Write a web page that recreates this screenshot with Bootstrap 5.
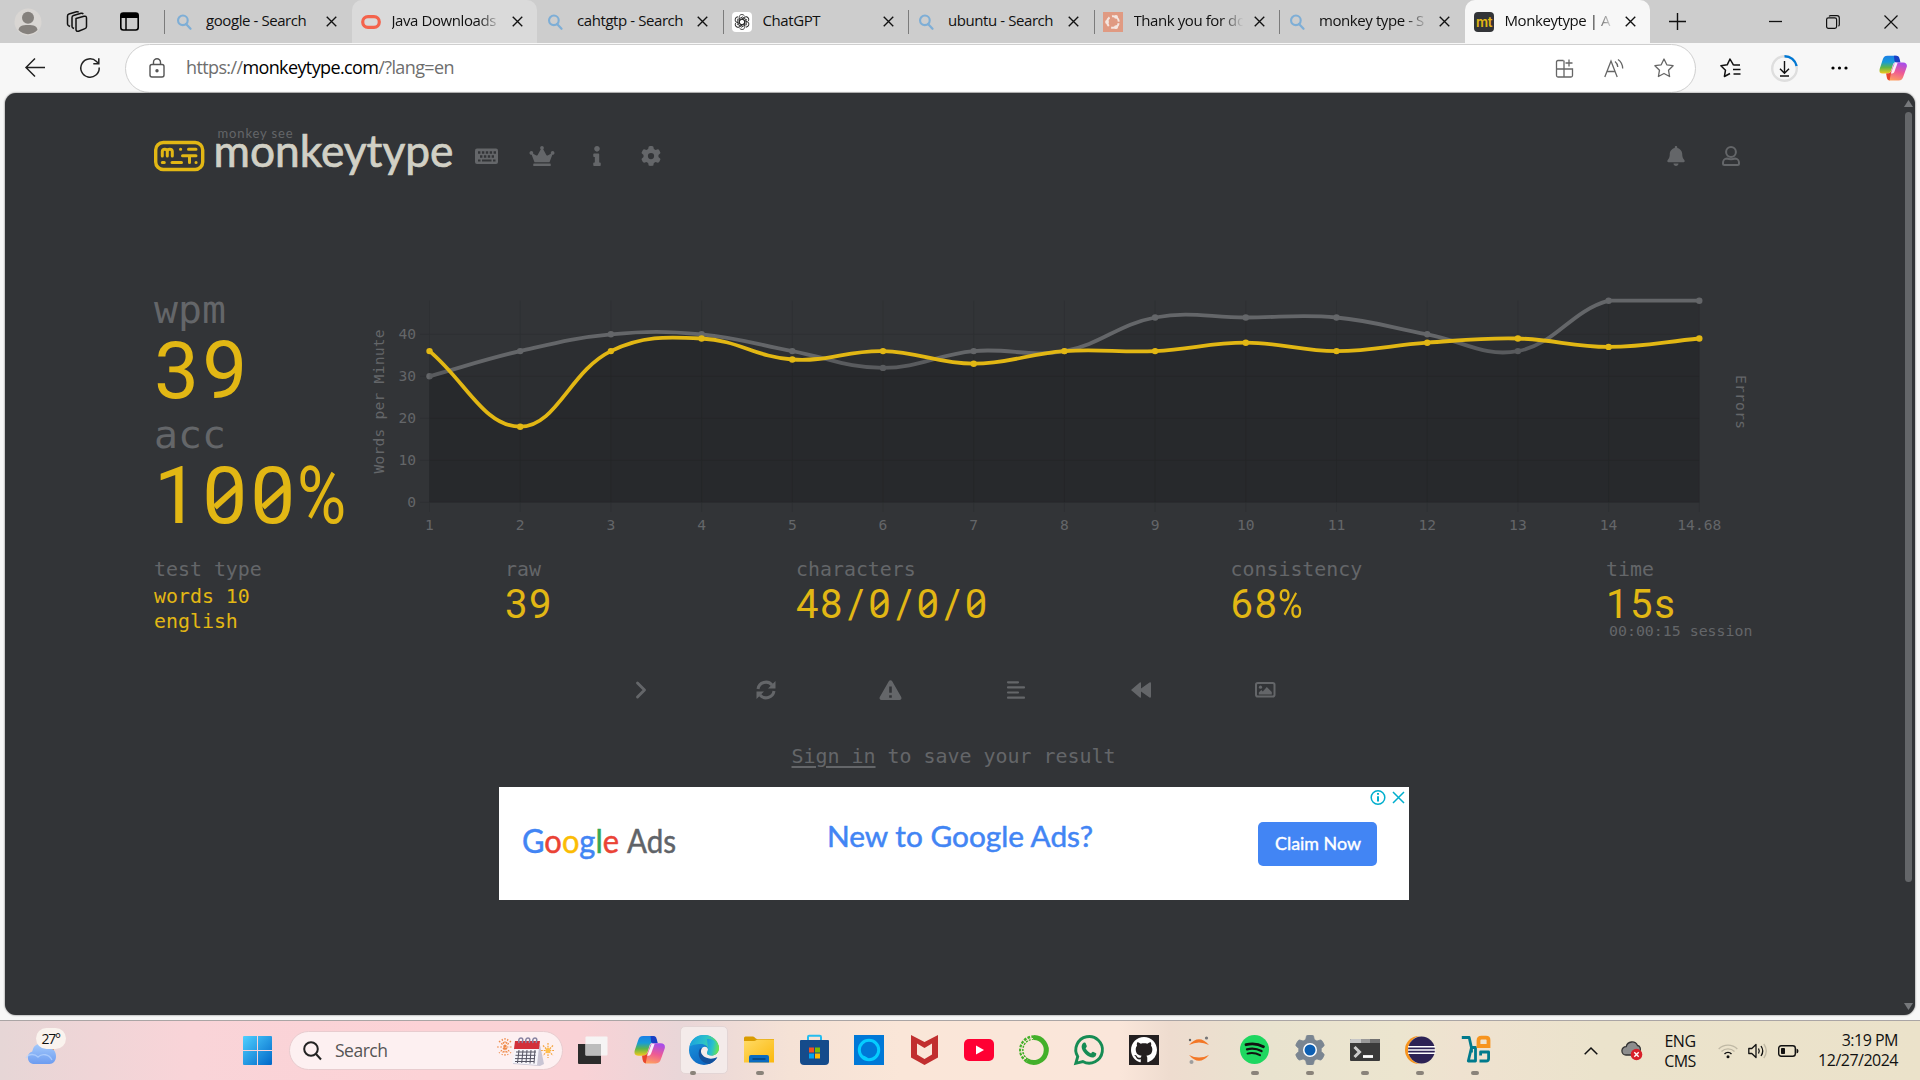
<!DOCTYPE html>
<html lang="en">
<head>
<meta charset="utf-8">
<meta name="viewport" content="width=device-width, initial-scale=1">
<title>Monkeytype | A minimalistic, customizable typing test</title>
<link href="https://cdn.jsdelivr.net/npm/bootstrap@5.3.0/dist/css/bootstrap.min.css" rel="stylesheet">
<style>
:root{--mt-bg:#323437;--mt-main:#e2b714;--mt-sub:#646669;--mt-text:#d1d0c5}
html,body{height:1080px;overflow:hidden}
body{width:1920px;background:#f7f7f7;font-family:"Open Sans","Noto Sans",sans-serif;color:#111}
svg{display:block;flex:none;overflow:visible}
.tabstrip{height:43px;background:#cdcdcd}
.strip-tools{width:166px;padding-left:14px;flex:none}
.btab{width:185.5px;flex:none;height:43px;font-size:15px;letter-spacing:-.42px;padding-left:9px;position:relative}
.btab.sep::before{content:"";position:absolute;left:0;top:10px;width:1px;height:24px;background:#7b7b7b}
.btab.first::before{left:-2px}
.btab .ico{width:20px;margin-right:11px}
.btab .ttl{width:114px;overflow:hidden;white-space:nowrap;line-height:22px;margin-top:-3px}
.btab .fade-out{-webkit-mask-image:linear-gradient(90deg,#000 76%,transparent 96%)}
.btab .x{margin-left:6px}
.btab.hov{background:#dadada;border-radius:10px 10px 0 0}
.btab.act{background:#f7f7f7;border-radius:10px 10px 0 0}
.toolbar{height:50px;background:#f7f7f7}
.address{width:1571px;height:49px;border:1px solid #cfcfcf;border-radius:25px;background:#fff;margin-left:20px;padding:0 21px 0 22px}
.url{font-size:18px;letter-spacing:-.62px;color:#6e6e6e;margin:-2px 0 0 20px;line-height:24px}
.url b{font-weight:400;color:#000}
.page{margin:0 5px;height:922px;background:var(--mt-bg);border-radius:11px;color:var(--mt-sub);font-family:"DejaVu Sans Mono","Liberation Mono",monospace;position:relative;box-shadow:0 0 2px #555}
.mt-head{padding:26px 175px 0 148px;height:187px}
.results{padding:0 154px 0 149px}
.side{width:216px;height:253px}
.lbl-lg{font-size:39.8px;line-height:40px;height:40px}
.figure-lg,.figure-md{font-family:Roboto,sans-serif;letter-spacing:.04em;color:var(--mt-main);white-space:nowrap}
.figure-lg{font-size:80px;line-height:85px;height:85px}
.figure-md{font-size:40px;line-height:44px;height:44px;margin-top:1px}
.z{position:relative}
.z::after{content:"";position:absolute;left:.11em;top:.56em;width:.38em;height:.08em;background:currentColor;transform:rotate(-42deg)}
.pc{display:inline-block;transform:scaleX(.84);transform-origin:0 0;margin-left:-.02em}
.sl{letter-spacing:.1em;padding-left:.09em}
.details{height:90px}
.details .lbl{font-size:19.9px;line-height:24px;height:24px}
.words{font-size:19.9px;line-height:25px;color:var(--mt-main)}
.session{font-size:14.9px;line-height:16px;margin:-4px 0 0 3px}
.acts{width:750px}
.acts>div{width:125px}
.signin{font-size:19.95px;line-height:26px}
.signin u{text-underline-offset:3px;text-decoration-thickness:1.5px}
.ad{width:910px;height:113px;background:#fff;position:relative}
.ad-btn{width:119px;height:44px;border-radius:5px;background:#4285f4}
.sbar{position:absolute;right:0;top:0;width:14px;height:922px}
.thumb{height:770px;width:7px;border-radius:4px;background:#646669}
.edge-strip{height:5px}
.taskbar{height:60px;border-top:1px solid #aaa5a5;background:linear-gradient(90deg,#e6d6d6 0,#f9d4d8 190px,#fcd2d6 430px,#f9d2d6 580px,#e9d6d8 680px,#f5e2d6 790px,#fae6d8 900px,#fae6da 1120px,#eedccf 1170px,#e9e3cf 1270px,#ece5cf 1400px,#efe2d0 1460px,#ebe3cc 1600px,#ebe2ca 1920px)}
.tb-search{width:274px;height:39px;border-radius:20px;background:#fdf0f1;border:1px solid #e8cccf;padding:0 7px 0 13px}
.tb-app{width:55.05px;height:60px;position:relative;flex:none}
.tb-app.run::after{content:"";position:absolute;bottom:6px;left:24px;width:8px;height:4px;border-radius:2px;background:#8a837a}
.tb-app.cur::before{content:"";position:absolute;left:3.5px;top:5px;width:48px;height:48px;border-radius:5px;background:#f4ebea;border:1px solid #e3d5d5}
.tb-app.cur::after{left:13px;width:6px}
.tb-app svg{position:relative;top:-1px}
.tray{font-size:16px;letter-spacing:-.5px;line-height:20px}
</style>
</head>
<body>
<svg width="0" height="0" class="position-absolute">
<defs>
<linearGradient id="cpA" x1="0" y1="0" x2="0" y2="1"><stop offset="0" stop-color="#1c7fe6"/><stop offset=".35" stop-color="#179bd8"/><stop offset=".65" stop-color="#5fb548"/><stop offset="1" stop-color="#f4c81b"/></linearGradient>
<linearGradient id="cpB" x1=".6" y1="0" x2=".3" y2="1"><stop offset="0" stop-color="#a94ee8"/><stop offset=".5" stop-color="#ee5a94"/><stop offset="1" stop-color="#ffa25e"/></linearGradient>
<symbol id="copilot" viewBox="0 0 30 30">
<path d="M9 2h9c2 0 3 1 3.500 3l1 3.500h-4c-2 0-3 1-3.600 3L13 18c-.8 2-2 3-4 3H4C1 21 0 19 .7 16L4 6c.8-2.500 2-4 5-4z" fill="url(#cpA)"/>
<path d="M16 2h2.500c2 0 3 1 3.500 3l1 4h-3.500c-2 0-2.500-.6-3-2z" fill="#1a3fc4"/>
<path d="M21 28.500h-9c-2 0-3-1-3.500-3L7.500 21H9c2.500 0 3.600-1 4.300-3l2.200-6.500C16.200 9.500 17.500 9 19.500 9H26c3 0 4.500 2 3.700 5L26 24.500c-.8 2.500-2 4-5 4z" fill="url(#cpB)"/>
<path d="M8 21c3 0 4.600-.9 5.300-3l-2 10.500C9.500 28 9 27 8.500 25.500z" fill="#e8452c"/>
<path d="M17 9.500h3l-3.500 9.500c-.8 1.800-1.800 2-3.800 2z" fill="#fff" opacity=".9"/>
</symbol>
<symbol id="lens" viewBox="0 0 16 16"><circle cx="7" cy="6.500" r="4.300" fill="none" stroke="#7eaed6" stroke-width="1.900"/><path d="M9.800 9.800l4 4.200" stroke="#7eaed6" stroke-width="2" stroke-linecap="round"/></symbol>
<symbol id="cross" viewBox="0 0 12 12"><path d="M.8.8l10.400 10.400M11.200.8L.8 11.200" stroke="#111" stroke-width="1.500"/></symbol>
<symbol id="gear" viewBox="0 0 512 512"><path d="M495.900 166.600c3.200 8.700.5 18.400-6.400 24.600l-43.300 39.400c1.100 8.300 1.700 16.800 1.700 25.400s-.6 17.100-1.700 25.400l43.300 39.400c6.900 6.200 9.600 15.900 6.400 24.600-4.400 11.900-9.700 23.300-15.800 34.300l-4.700 8.100c-6.600 11-14 21.400-22.100 31.200-5.900 7.200-15.700 9.600-24.500 6.800l-55.700-17.700c-13.400 10.300-28.200 18.900-44 25.400l-12.500 57.100c-2 9.100-9 16.300-18.200 17.800-13.800 2.300-28 3.500-42.500 3.500s-28.700-1.200-42.500-3.500c-9.200-1.500-16.200-8.700-18.200-17.800l-12.500-57.100c-15.800-6.500-30.600-15.100-44-25.400l-55.600 17.800c-8.800 2.800-18.600.3-24.500-6.800-8.100-9.800-15.500-20.200-22.100-31.200l-4.700-8.100c-6.100-11-11.400-22.400-15.800-34.300-3.200-8.700-.5-18.400 6.400-24.600l43.300-39.400C64.600 273.100 64 264.600 64 256s.6-17.100 1.700-25.400l-43.300-39.400c-6.900-6.200-9.600-15.900-6.400-24.600 4.400-11.900 9.700-23.300 15.800-34.300l4.700-8.100c6.600-11 14-21.400 22.100-31.200 5.900-7.200 15.700-9.600 24.500-6.800l55.700 17.700c13.400-10.300 28.200-18.900 44-25.400l12.500-57.100c2-9.100 9-16.300 18.200-17.800C227.300 1.200 241.500 0 256 0s28.700 1.200 42.500 3.500c9.200 1.500 16.200 8.700 18.200 17.800l12.500 57.100c15.800 6.500 30.600 15.100 44 25.400l55.700-17.700c8.800-2.800 18.600-.3 24.500 6.800 8.100 9.800 15.500 20.200 22.100 31.200l4.700 8.100c6.100 11 11.400 22.400 15.800 34.300zM256 336a80 80 0 1 0 0-160 80 80 0 1 0 0 160z"/></symbol>
</defs>
</svg>

<div class="tabstrip d-flex">
  <div class="strip-tools d-flex align-items-center">
    <svg width="28" height="28" viewBox="0 0 28 28"><circle cx="14" cy="14" r="13.500" fill="#d9d6d3"/><circle cx="14" cy="9.800" r="6" fill="#85817d"/><path d="M4.500 22c.5-4 3.500-5 9.500-5s9 1 9.500 5a13 13 0 0 1-19 0z" fill="#85817d"/></svg>
    <svg class="ms-4" width="22" height="22" viewBox="0 0 22 22" fill="none" stroke="#111" stroke-width="1.500" stroke-linejoin="round"><path d="M10 7.500l8-2.200c1.500-.4 2.500.3 2.500 1.700v8.500c0 1-.5 1.800-1.500 2.100l-6.500 2.600c-1.500.5-2.500-.2-2.500-1.700z"/><path d="M8 17.500l-1-.5c-.7-.3-1-1-1-1.700V6.500c0-1 .5-1.700 1.500-2L15 2.300c1-.3 1.800 0 2.200.8"/><path d="M4 15.500l-1.500-.8c-.7-.4-1-1-1-1.700V5c0-1 .5-1.700 1.500-2L10.500.8c1-.3 1.800 0 2.200.6"/></svg>
    <svg style="margin-left:32px" width="19" height="19" viewBox="0 0 19 19"><rect x=".8" y="1" width="17.400" height="17" rx="2.500" fill="none" stroke="#000" stroke-width="1.600"/><path d="M1 6V3q0-2 2-2h13q2 0 2 2v3z"/><path d="M6 6v12" stroke="#000" stroke-width="1.500"/></svg>
  </div>
  <div class="btab sep first d-flex align-items-center"><div class="ico"><svg width="18" height="18"><use href="#lens"/></svg></div><div class="ttl">google - Search</div><svg class="x" width="11" height="11"><use href="#cross"/></svg></div>
  <div class="btab hov d-flex align-items-center"><div class="ico"><svg width="20" height="14" viewBox="0 0 20 14"><rect x="1.700" y="1.700" width="16.600" height="10.600" rx="5.300" fill="none" stroke="#f4634c" stroke-width="3.200"/></svg></div><div class="ttl fade-out">Java Downloads</div><svg class="x" width="11" height="11"><use href="#cross"/></svg></div>
  <div class="btab d-flex align-items-center"><div class="ico"><svg width="18" height="18"><use href="#lens"/></svg></div><div class="ttl">cahtgtp - Search</div><svg class="x" width="11" height="11"><use href="#cross"/></svg></div>
  <div class="btab sep d-flex align-items-center"><div class="ico"><svg width="20" height="20" viewBox="0 0 20 20"><rect width="20" height="20" rx="4" fill="#fff"/><g fill="none" stroke="#222" stroke-width=".9"><g id="pet"><path d="M10 7.200l2.800 1.600v4.400L9.200 15.300"/><path d="M7.200 7.500V5.300C7.200 2.300 10.700 1.600 12.500 3.900"/></g><use href="#pet" transform="rotate(60 10 10)"/><use href="#pet" transform="rotate(120 10 10)"/><use href="#pet" transform="rotate(180 10 10)"/><use href="#pet" transform="rotate(240 10 10)"/><use href="#pet" transform="rotate(300 10 10)"/></g></svg></div><div class="ttl">ChatGPT</div><svg class="x" width="11" height="11"><use href="#cross"/></svg></div>
  <div class="btab sep d-flex align-items-center"><div class="ico"><svg width="18" height="18"><use href="#lens"/></svg></div><div class="ttl">ubuntu - Search</div><svg class="x" width="11" height="11"><use href="#cross"/></svg></div>
  <div class="btab sep d-flex align-items-center"><div class="ico"><svg width="20" height="20" viewBox="0 0 20 20"><rect width="20" height="20" fill="#e09a82"/><circle cx="10" cy="10" r="5.800" fill="none" stroke="#f5e6e0" stroke-width="2" stroke-dasharray="9.500 2.650" stroke-dashoffset="-1.300"/><g fill="#f5e6e0"><circle cx="4" cy="10" r="1.900"/><circle cx="13" cy="4.800" r="1.900"/><circle cx="13" cy="15.200" r="1.900"/></g></svg></div><div class="ttl fade-out">Thank you for do</div><svg class="x" width="11" height="11"><use href="#cross"/></svg></div>
  <div class="btab sep d-flex align-items-center"><div class="ico"><svg width="18" height="18"><use href="#lens"/></svg></div><div class="ttl fade-out">monkey type - S</div><svg class="x" width="11" height="11"><use href="#cross"/></svg></div>
  <div class="btab act d-flex align-items-center"><div class="ico"><svg width="20" height="20"><rect width="20" height="20" rx="4" fill="#323437"/><text x="2" y="14.500" font-family="Inter,sans-serif" font-size="13" font-weight="600" fill="#e2b714" textLength="16" lengthAdjust="spacingAndGlyphs">mt</text></svg></div><div class="ttl fade-out">Monkeytype | A</div><svg class="x" width="11" height="11"><use href="#cross"/></svg></div>
  <div class="d-flex align-items-center flex-grow-1 justify-content-between" style="padding:0 22px 0 19px">
    <svg width="17" height="17" viewBox="0 0 17 17"><path d="M8.500 0v17M0 8.500h17" stroke="#111" stroke-width="1.400"/></svg>
    <div class="d-flex align-items-center" style="gap:44px">
      <svg width="13" height="13" viewBox="0 0 13 13"><path d="M0 6.500h13" stroke="#111" stroke-width="1.300"/></svg>
      <svg width="14" height="14" viewBox="0 0 14 14" fill="none" stroke="#111" stroke-width="1.200"><rect x=".6" y="2.800" width="10" height="10.500" rx="1.800"/><path d="M3 1.300c.5-.5 1-.7 1.700-.7h6.300c1.400 0 2.300 1 2.300 2.300v6.500c0 .8-.3 1.500-.8 1.900"/></svg>
      <svg width="14" height="14" viewBox="0 0 14 14"><path d="M.5.500l13 13M13.500.500l-13 13" stroke="#111" stroke-width="1.200"/></svg>
    </div>
  </div>
</div>

<div class="toolbar d-flex align-items-center">
  <svg style="margin-left:25px" width="20" height="20" viewBox="0 0 20 20" fill="none" stroke="#222" stroke-width="1.500"><path d="M20 9.500H1M10 .5L1 9.500l9 9"/></svg>
  <svg style="margin-left:35px" width="20" height="20" viewBox="0 0 20 20" fill="none" stroke="#222" stroke-width="1.500"><path d="M19.200 9.500A9.200 9.200 0 1 1 16.500 3.500L18.500 5.500M18.800.3v5.500h-5.500"/></svg>
  <div class="address d-flex align-items-center" style="margin-left:25px">
    <svg width="18" height="20" viewBox="0 0 18 20" fill="none" stroke="#555" stroke-width="1.400"><rect x="2" y="6.500" width="14" height="12.500" rx="2"/><path d="M5.500 6.500V4.200a3.500 3.500 0 0 1 7 0v2.300"/><circle cx="9" cy="12.700" r="1" fill="#555"/></svg>
    <div class="url">https://<b>monkeytype.com</b>/?lang=en</div>
    <div class="ms-auto d-flex align-items-center" style="gap:30px">
      <svg width="19" height="19" viewBox="0 0 19 19" fill="none" stroke="#666" stroke-width="1.300"><path d="M8.500 1.500H3q-1.500 0-1.500 1.500v13.500Q1.500 18 3 18h13q1.500 0 1.500-1.500V10H1.500M9 1.500V18M17.500 10v-.5M14 .5v7M10.500 4h7"/></svg>
      <svg width="20" height="19" viewBox="0 0 20 19" fill="none" stroke="#666" stroke-width="1.300"><path d="M.8 18L7 2l6.200 16M3 12.500h8M11 2.500c1.600 1.300 2.600 3 2.800 5.500M14 .5c3 2 4.500 4.800 4.700 9"/></svg>
      <svg width="20" height="20" viewBox="0 0 20 20" fill="none" stroke="#666" stroke-width="1.300" stroke-linejoin="round"><path d="M10 1l2.800 5.800 6.300.9-4.600 4.500 1.100 6.300L10 15.500l-5.600 3 1.100-6.300L.9 7.700l6.300-.9z"/></svg>
    </div>
  </div>
  <div class="d-flex align-items-center" style="margin-left:24px;gap:21px">
    <svg width="21" height="20" viewBox="0 0 21 20" fill="none" stroke="#111" stroke-width="1.500" stroke-linejoin="round"><path d="M13.500 7.200L10 1 7.200 6.800.9 7.700l4.600 4.500-1.100 6.300L10 15.500M13.300 7H20M13 11.500h7.500M13.500 16h7"/></svg>
    <svg style="margin-left:9px" width="27" height="27" viewBox="0 0 27 27" fill="none"><circle cx="13.500" cy="13.500" r="12.300" stroke="#dedede" stroke-width="2.400"/><path d="M13.500 1.200A12.300 12.300 0 0 1 25.600 11" stroke="#0078d4" stroke-width="2.400"/><path d="M13.500 6v12M9 13.800l4.500 4.500 4.500-4.500M9 21h9" stroke="#111" stroke-width="1.400"/></svg>
    <svg style="margin-left:12px" width="17" height="4"><circle cx="2" cy="2" r="1.600"/><circle cx="8.500" cy="2" r="1.600"/><circle cx="15" cy="2" r="1.600"/></svg>
    <svg style="margin-left:10px" width="28" height="28"><use href="#copilot"/></svg>
  </div>
</div>

<main class="page">
  <header class="mt-head d-flex align-items-start">
    <svg width="306" height="70" viewBox="0 0 306 70">
      <g transform="translate(.5 0)" fill="none" stroke="#e2b714"><rect x="2.200" y="23.500" width="47" height="27" rx="7.500" stroke-width="3.400"/><g stroke-width="3" stroke-linecap="round" stroke-linejoin="round"><path d="M8.800 37v-4.500q0-2.300 2.500-2.300t2.500 2.300V37m0-4.500q0-2.300 2.500-2.300t2.500 2.300V37M27 30.300h.2M35 30.300h7.500M29 36.700h13.500M36 37v6.500M8.800 43.500h2M18.500 43.500h9.500M42.500 43.500h.1"/></g></g>
      <text x="64.500" y="19" font-family="Lato,sans-serif" font-size="13" fill="#646669" textLength="75">monkey see</text>
      <text x="60.500" y="48" font-family="Lato,sans-serif" font-size="43.500" fill="#d1d0c5" stroke="#d1d0c5" stroke-width=".7" textLength="240" lengthAdjust="spacingAndGlyphs">monkeytype</text>
    </svg>
    <nav class="d-flex align-items-center" style="height:73px;margin-left:16px">
      <svg width="24" height="18" viewBox="0 0 24 18"><rect y="1.500" width="23" height="15.500" rx="2" fill="#646669"/><path d="M3 5.500h18M5 9.500h14" stroke="#323437" stroke-width="2.400" stroke-dasharray="2.400 1.500"/><path d="M3 13.500h2.500M7 13.500h9.500M18 13.500h2.500" stroke="#323437" stroke-width="2"/></svg>
      <svg style="margin-left:30px" width="26" height="20" viewBox="0 0 640 512" fill="#646669"><path d="M528 448H112c-8.800 0-16 7.200-16 16v32c0 8.800 7.200 16 16 16h416c8.800 0 16-7.200 16-16v-32c0-8.800-7.200-16-16-16zm64-320c-26.500 0-48 21.500-48 48 0 7.100 1.600 13.700 4.400 19.800L476 239.200c-15.400 9.200-35.300 4-44.200-11.600L350.300 85C361 76.200 368 63 368 48c0-26.500-21.500-48-48-48s-48 21.500-48 48c0 15 7 28.200 17.700 37l-81.500 142.600c-8.900 15.600-28.900 20.800-44.200 11.600l-72.300-43.400c2.700-6 4.400-12.700 4.400-19.800 0-26.500-21.500-48-48-48S0 149.500 0 176s21.500 48 48 48c2.600 0 5.200-.4 7.700-.8L128 416h384l72.300-192.800c2.500.4 5.100.8 7.700.8 26.500 0 48-21.500 48-48s-21.500-48-48-48z"/></svg>
      <svg style="margin-left:38px" width="8" height="20" viewBox="0 0 192 512" fill="#646669"><path d="M20 424.200h20V279.800H20c-11 0-20-9-20-20V212c0-11 9-20 20-20h112c11 0 20 9 20 20v212.200h20c11 0 20 9 20 20V492c0 11-9 20-20 20H20c-11 0-20-9-20-20v-47.800c0-11 9-20 20-20zM96 0C56.200 0 24 32.200 24 72s32.200 72 72 72 72-32.200 72-72S135.800 0 96 0z"/></svg>
      <svg style="margin-left:40px" width="20" height="20" fill="#646669"><use href="#gear"/></svg>
    </nav>
    <div class="ms-auto d-flex align-items-center" style="height:73px;gap:37px">
      <svg width="18" height="20" viewBox="0 0 448 512" fill="#646669"><path d="M224 0c-17.700 0-32 14.300-32 32v19.200C119 66 64 130.600 64 208v18.800c0 47-17.300 92.400-48.500 127.600l-7.400 8.300c-8.400 9.400-10.400 22.900-5.300 34.400S19.400 416 32 416h384c12.600 0 24-7.400 29.200-18.900s3.100-25-5.300-34.400l-7.400-8.300C401.300 319.200 384 273.900 384 226.800V208c0-77.400-55-142-128-156.800V32c0-17.700-14.300-32-32-32zm45.300 493.300c12-12 18.700-28.300 18.700-45.300H160c0 17 6.700 33.300 18.700 45.300S207 512 224 512s33.300-6.700 45.300-18.700z"/></svg>
      <svg width="18" height="20" viewBox="0 0 18 20" fill="none" stroke="#646669" stroke-width="2"><circle cx="9" cy="6" r="4.900"/><path d="M5 12.500c1.500.6 2.500.7 4 .7s2.500-.1 4-.7c2.500 0 4 2 4 4.300v.7q0 1.500-1.500 1.500h-13Q1 19 1 17.500v-.7c0-2.300 1.500-4.300 4-4.300z"/></svg>
    </div>
  </header>

  <section class="results">
    <div class="d-flex">
      <div class="side" style="padding-top:9px">
        <div class="lbl-lg">wpm</div>
        <div class="figure-lg">39</div>
        <div class="lbl-lg">acc</div>
        <div class="figure-lg">1<span class="z">0</span><span class="z">0</span><span class="pc">%</span></div>
      </div>
      <svg id="wpmChart" width="1390" height="253" viewBox="370 280 1390 253" font-family="DejaVu Sans Mono,monospace" font-size="14.600" fill="#646669"></svg>
    </div>
    <div class="details d-flex" style="padding-top:25px">
      <div style="width:351px"><div class="lbl">test type</div><div class="words" style="margin-top:2px">words 10<br>english</div></div>
      <div style="width:291px"><div class="lbl">raw</div><div class="figure-md">39</div></div>
      <div style="width:434.500px"><div class="lbl">characters</div><div class="figure-md">48<span class="sl">/</span><span class="z">0</span><span class="sl">/</span><span class="z">0</span><span class="sl">/</span><span class="z">0</span></div></div>
      <div style="width:375.500px"><div class="lbl">consistency</div><div class="figure-md">68<span class="pc">%</span></div></div>
      <div class="text-nowrap" style="width:150px"><div class="lbl">time</div><div class="figure-md">15s</div><div class="session">00:00:15 session</div></div>
    </div>
  </section>

  <div class="d-flex" style="padding-left:573px;margin-top:51px;height:32px">
    <div class="acts d-flex align-items-center">
      <div class="d-flex justify-content-center"><svg width="12" height="18" viewBox="0 0 12 18" fill="none" stroke="#646669" stroke-width="2.900" stroke-linecap="round" stroke-linejoin="round"><path d="M2.500 2L9.500 9l-7 7"/></svg></div>
      <div class="d-flex justify-content-center"><svg width="20" height="20" viewBox="0 0 20 20" fill="none" stroke="#646669" stroke-width="3"><path d="M2 9A8 8 0 0 1 16 5M18 11A8 8 0 0 1 4 15"/><path d="M19.500 1v7.500H12zM.5 19v-7.500H8z" fill="#646669" stroke="none"/></svg></div>
      <div class="d-flex justify-content-center"><svg width="23" height="20" viewBox="0 0 23 20"><path d="M11.500.3c.8 0 1.300.3 1.700 1l9 15.800c.8 1.400 0 2.900-1.700 2.900h-18C.8 20 0 18.500.8 17.100l9-15.800c.4-.7.900-1 1.700-1z" fill="#646669"/><path d="M11.500 6.500v6.300M11.500 15.300v2.400" stroke="#323437" stroke-width="2.600"/></svg></div>
      <div class="d-flex justify-content-center"><svg width="18" height="18" viewBox="0 0 18 18" stroke="#646669" stroke-width="2.200" stroke-linecap="round"><path d="M1 1.300h10M1 6.400h16M1 11.500h10M1 16.700h16"/></svg></div>
      <div class="d-flex justify-content-center"><svg width="20" height="16" viewBox="0 0 20 16" fill="#646669"><path d="M0 8L8.800.6q1.200-.8 1.200.7V6.600L18.500.6Q20-.2 20 1.500v13q0 1.700-1.500.9L10 9.400v5.300q0 1.500-1.200.7z"/></svg></div>
      <div class="d-flex justify-content-center"><svg width="21" height="16" viewBox="0 0 21 16"><rect x="1" y="1" width="18.500" height="13.500" rx="1.800" fill="none" stroke="#646669" stroke-width="2"/><circle cx="5.500" cy="5.200" r="1.600" fill="#646669"/><path d="M3.800 12.500v-2l2.500-2.500 1.500 1.500 4-4.500 5 5v2.500z" fill="#646669"/></svg></div>
    </div>
  </div>
  <div class="signin" style="padding-left:786.500px;margin-top:37px"><u>Sign in</u> to save your result</div>

  <div class="ad d-flex align-items-center" style="margin:18px 0 0 494px">
    <svg width="154" height="40" style="margin:-3px 0 0 24px" font-family="Lato,sans-serif" font-size="32" stroke-width=".5"><text x="-1" y="31" textLength="97" lengthAdjust="spacingAndGlyphs"><tspan fill="#4285f4" stroke="#4285f4">G</tspan><tspan fill="#ea4335" stroke="#ea4335">o</tspan><tspan fill="#fbbc04" stroke="#fbbc04">o</tspan><tspan fill="#4285f4" stroke="#4285f4">g</tspan><tspan fill="#34a853" stroke="#34a853">l</tspan><tspan fill="#ea4335" stroke="#ea4335">e</tspan></text><text x="104" y="31" fill="#5f6368" stroke="#5f6368" textLength="49" lengthAdjust="spacingAndGlyphs">Ads</text></svg>
    <svg width="266" height="40" style="margin:-5px 0 0 150px"><text x="0" y="26" font-family="Lato,sans-serif" font-size="29" fill="#4285f4" stroke="#4285f4" stroke-width=".5" textLength="266" lengthAdjust="spacingAndGlyphs">New to Google Ads?</text></svg>
    <div class="ad-btn d-flex align-items-center justify-content-center" style="margin-left:165px"><svg width="86" height="24"><text x="0" y="18" font-family="Lato,sans-serif" font-size="18" fill="#fff" stroke="#fff" stroke-width=".4" textLength="86" lengthAdjust="spacingAndGlyphs">Claim Now</text></svg></div>
    <svg class="position-absolute top-0 end-0" width="39" height="20" fill="none" stroke="#00aecd" stroke-width="1.500"><circle cx="8" cy="10.500" r="6.800"/><path d="M8 9.200v5.200M8 6v1.800" stroke-width="2"/><path d="M23 5l11 11M34 5L23 16"/></svg>
  </div>

  <div class="sbar d-flex flex-column align-items-center" style="padding-top:7px">
    <svg width="9" height="7" viewBox="0 0 9 7"><path d="M4.500 0L9 7H0z" fill="#76787b"/></svg>
    <div class="thumb" style="margin-top:5px"></div>
    <svg style="margin-top:121px" width="9" height="7" viewBox="0 0 9 7"><path d="M4.500 7L9 0H0z" fill="#76787b"/></svg>
  </div>
</main>
<div class="edge-strip"></div>

<footer class="taskbar d-flex align-items-center">
  <svg style="margin:-4px 0 0 26px" width="42" height="42" viewBox="0 0 42 42">
    <defs><linearGradient id="cl" x1="0" y1="0" x2="0" y2="1"><stop offset="0" stop-color="#a4cafc"/><stop offset="1" stop-color="#6d9cf0"/></linearGradient></defs>
    <circle cx="21" cy="20" r="7" fill="#f7831e"/><path d="M7 36a6.500 6.500 0 0 1-.8-12.500A9.500 9.500 0 0 1 24 20.500c4 .3 6 4 6 8 0 4.500-3 7.500-6.500 7.500z" fill="url(#cl)"/><path d="M0 30c3-5 9-4 12-1 4-4 11-3 14 3" fill="none" stroke="#b9d6ff" stroke-width="1.300" opacity=".7"/>
    <rect x="10" y="0" width="30" height="21" rx="10.500" fill="#faf3ee"/><text x="15.500" y="15.500" font-family="Open Sans,sans-serif" font-size="14" fill="#111" textLength="19.500">27°</text></svg>
  <svg style="margin-left:175px" width="29" height="29" viewBox="0 0 29 29"><defs><linearGradient id="wn" x2="1" y2="1"><stop stop-color="#4fd0ff"/><stop offset="1" stop-color="#0067c8"/></linearGradient></defs><path d="M0 1q0-1 1-1h13v14H0zM15 0h13q1 0 1 1v13H15zM0 15h14v14H1q-1 0-1-1zM15 15h14v13q0 1-1 1H15z" fill="url(#wn)"/></svg>
  <div class="tb-search d-flex align-items-center" style="margin-left:17px">
    <svg width="19" height="20" viewBox="0 0 19 20" fill="none" stroke="#222" stroke-width="2"><circle cx="8" cy="8" r="6.800"/><path d="M13 13l5 5.500"/></svg>
    <span style="font-size:17.500px;letter-spacing:-.5px;color:#555;margin-left:13px">Search</span>
    <svg class="ms-auto" width="58" height="32" viewBox="0 0 58 32"><g stroke="#ef8a4a" stroke-width="1.200" stroke-dasharray="1.800 1.400"><path d="M8 3v18M0 12h16M2 6l12 12M14 6L2 18M5 4l6 16M11 4L5 20"/></g><g stroke="#f5a33a" stroke-width="1.200" stroke-dasharray="1.800 1"><path d="M51 8v15M44 15.500h14M46 10.500l10 10M56 10.500l-10 10"/></g><circle cx="51" cy="15.500" r="2.500" fill="#ffc04a"/><path d="M18 10h25l4 19-4 2-27-2z" fill="#c9c5d4"/><path d="M18 12h24l-2 18-25-2z" fill="#f7f5fa"/><path d="M18 6h25l-1 8H17z" fill="#d3303a"/><g stroke="#555463" stroke-width="1"><path d="M19 17h20M18.500 20.300h20M18 23.600h20M18 26.500h19M22 15l-1.500 13M26 15l-1.300 13M30 15l-1 13M34 15l-1 13.500M38 15l-1 13.500"/></g><g fill="none" stroke="#8782a0" stroke-width="1.500"><path d="M22 8q-1-5 2-5t1 5M29 8q-1-5 2-5t1 5M36 8q-1-5 2-5t1 5"/></g></svg>
  </div>
  <div class="d-flex" style="margin-left:.5px">
    <div class="tb-app d-flex align-items-center justify-content-center" style="width:58px"><svg width="30" height="28" viewBox="0 0 30 28"><path d="M0 8h23v20H1q-1 0-1-1z" fill="#2c2c2c"/><rect x="7.500" y=".5" width="22" height="19" rx="1" fill="#f6f6f6" opacity=".95"/><path d="M7.500 8H23v11.500H7.500z" fill="#bcbcbc"/></svg></div>
    <div class="tb-app d-flex align-items-center justify-content-center"><svg width="31" height="31"><use href="#copilot"/></svg></div>
    <div class="tb-app cur run d-flex align-items-center justify-content-center"><svg width="30" height="30" viewBox="0 0 30 30"><defs><linearGradient id="e1" x1="0" y1=".2" x2="1" y2=".5"><stop stop-color="#1a9fe0"/><stop offset=".5" stop-color="#2bc2c9"/><stop offset="1" stop-color="#6be54b"/></linearGradient><linearGradient id="e2" x2=".6" y2="1"><stop stop-color="#1b9de2"/><stop offset="1" stop-color="#0d64c0"/></linearGradient></defs><circle cx="15" cy="15" r="15" fill="url(#e2)"/><path d="M.5 12C1.500 4.500 7.500 0 15 0c9 0 15 6.500 15 13 0 5-4 7.500-7.500 7.500-3 0-4.500-1-4.500-2.500 0-1 1-1.500 1-4 0-2.500-3-5-7-5C7 9 2 10 .5 12z" fill="url(#e1)"/><path d="M11 13.500c-3.500 6 0 14.500 9 15.600C24 27.500 27 25 28.300 22c-6 3-12 1.500-14.500-2.500-1.500-2.200-1-4.500.2-6.500z" fill="#12509c"/><path d="M30 13c0 5-4 7.500-7.500 7.500-3 0-4.500-1-4.500-2.500 0-1 1-1.500 1-4a3.700 3.700 0 0 0-4.500-2c-2.500 1.200-3.500 5-1.200 7.800 3 4 9.500 5.200 15 2.200l1.700 1z" fill="#f4ebea"/><path d="M18 4c8-1 12 5 12 9 0 5-4 7.500-7.500 7.500-3 0-4.500-1-4.500-2.500 0-1 1-1.500 1-4z" fill="url(#e1)"/></svg></div>
    <div class="tb-app run d-flex align-items-center justify-content-center"><svg width="30" height="27" viewBox="0 0 30 27"><defs><linearGradient id="fe" x2="1" y2="1"><stop stop-color="#ffdb66"/><stop offset="1" stop-color="#fbb80c"/></linearGradient></defs><path d="M0 2Q0 .5 1.500.5H9c2 0 2 2.500 4 2.500h17v8H0z" fill="#d99b00"/><path d="M0 5h10c2 0 2-1.500 4-1.500h16v23H0z" fill="url(#fe)"/><path d="M5 26.500V21q0-2 2-2h16q2 0 2 2v5.500z" fill="#0a6bc0"/><path d="M8.500 23h13" stroke="#043c70" stroke-width="1.300"/></svg></div>
    <div class="tb-app d-flex align-items-center justify-content-center"><svg width="29" height="30" viewBox="0 0 29 30"><path d="M8 8V2q0-1.200 1.200-1.200h10.600Q21 .8 21 2v6" fill="none" stroke="#24bdf0" stroke-width="2"/><path d="M0 6q0-1 1-1h27q1 0 1 1v20q0 4-4 4H4q-4 0-4-4z" fill="#154b8b"/><path d="M9 12.500h5v5H9z" fill="#f25022"/><path d="M15 12.500h5v5h-5z" fill="#7fba00"/><path d="M9 18.500h5v5H9z" fill="#00a4ef"/><path d="M15 18.500h5v5h-5z" fill="#ffb900"/></svg></div>
    <div class="tb-app d-flex align-items-center justify-content-center"><svg width="30" height="30" viewBox="0 0 30 30"><path d="M0 0h30v30H0z" fill="#0078d7"/><circle cx="15" cy="15" r="9.700" fill="none" stroke="#05cdff" stroke-width="3"/><path d="M9 20.500c3 .5 5 2.500 5.500 5L9 24z" fill="#05cdff"/></svg></div>
    <div class="tb-app d-flex align-items-center justify-content-center"><svg width="27" height="30" viewBox="0 0 27 30"><path d="M0 0l13.500 7L27 0v22.500L13.500 30 0 22.500zM6 8.500v11L13.500 24l7.500-4.500v-11L13.500 13z" fill="#c12f2f" fill-rule="evenodd"/></svg></div>
    <div class="tb-app d-flex align-items-center justify-content-center"><svg width="30" height="22" viewBox="0 0 30 22"><rect width="30" height="22" rx="5" fill="#ff0033"/><path d="M12 6.500l8 4.500-8 4.500z" fill="#fff"/></svg></div>
    <div class="tb-app d-flex align-items-center justify-content-center"><svg width="30" height="30" viewBox="0 0 30 30" fill="none" stroke="#43b02a"><path d="M15 2.500a12.500 12.500 0 1 1-7 23" stroke-width="5"/><path d="M8 25.500A12.500 12.500 0 0 1 15 2.500" stroke-width="4.500" stroke-dasharray="2.500 1.200"/><path d="M7 24A11.500 11.500 0 0 1 14 3.500" stroke="#fae6d8" stroke-width="1"/></svg></div>
    <div class="tb-app d-flex align-items-center justify-content-center"><svg width="30" height="30" viewBox="0 0 30 30"><path d="M1.800 28.300l1.900-6.700A13.300 13.300 0 1 1 8.800 26.500z" fill="none" stroke="#168c54" stroke-width="2.900"/><path d="M10.500 7.500c.8 0 1 .2 1.300.9l1 2.500c.2.600-.5 1.500-1.200 2.300 1.300 2.600 3 4 5.500 5.200.7-.8 1.300-1.800 1.900-1.600l3.200 1.500c.4 2.800-1.700 4.200-3.600 4.200-4.500 0-11-6-11-10.800 0-2 1.500-4.200 2.900-4.200z" fill="#168c54"/></svg></div>
    <div class="tb-app d-flex align-items-center justify-content-center"><svg width="30" height="30" viewBox="0 0 30 30"><path d="M0 0h30v30H0z" fill="#231f20"/><g transform="translate(2 2) scale(1.625)"><path fill="#fff" d="M8 0C3.580 0 0 3.580 0 8c0 3.540 2.290 6.530 5.470 7.590.4.070.55-.17.55-.38 0-.19-.01-.82-.01-1.490-2.010.37-2.530-.49-2.690-.94-.09-.23-.48-.94-.82-1.130-.28-.15-.68-.52-.01-.53.63-.01 1.080.58 1.230.82.72 1.210 1.870.87 2.330.66.07-.52.28-.87.51-1.070-1.780-.2-3.640-.89-3.640-3.950 0-.87.31-1.590.82-2.150-.08-.2-.36-1.020.08-2.120 0 0 .67-.21 2.200.82.64-.18 1.320-.27 2-.27s1.360.09 2 .27c1.530-1.040 2.200-.82 2.200-.82.44 1.100.16 1.920.08 2.120.51.56.82 1.270.82 2.150 0 3.070-1.870 3.750-3.650 3.950.29.25.54.73.54 1.480 0 1.070-.01 1.930-.01 2.200 0 .21.15.46.55.38A8.010 8.010 0 0 0 16 8c0-4.420-3.580-8-8-8z"/></g></svg></div>
    <div class="tb-app d-flex align-items-center justify-content-center"><svg width="22" height="28" viewBox="0 0 22 28"><path d="M1 9Q11-2.500 21 9 11 4 1 9zM1 19q10 11.500 20 0-10 5-20 0z" fill="#f37726"/><circle cx="18.500" cy="2" r="1.600" fill="#767677"/><circle cx="2" cy="4" r="1.200" fill="#616262"/><circle cx="3.500" cy="26" r="2" fill="#9e9e9e"/></svg></div>
    <div class="tb-app run d-flex align-items-center justify-content-center"><svg width="29" height="29" viewBox="0 0 29 29"><circle cx="14.500" cy="14.500" r="14.500" fill="#1ed760"/><g fill="none" stroke="#111" stroke-linecap="round"><path d="M6 9.700c6-1.500 12-1 17.500 2" stroke-width="2.800"/><path d="M7 14.300c5-1.300 10-.7 14.500 1.800" stroke-width="2.300"/><path d="M7.500 18.600c4-1 8.500-.6 12.500 1.600" stroke-width="2"/></g></svg></div>
    <div class="tb-app run d-flex align-items-center justify-content-center"><svg width="30" height="30" viewBox="0 0 30 30"><use href="#gear" width="30" height="30" fill="#7a8591" stroke="#7a8591" stroke-width="14"/><circle cx="15" cy="15" r="8" fill="#7a8591"/><circle cx="15" cy="15" r="7" fill="#fff"/><circle cx="15" cy="15" r="5.500" fill="#0d5fb3"/></svg></div>
    <div class="tb-app run d-flex align-items-center justify-content-center"><svg width="30" height="22" viewBox="0 0 30 22"><path d="M0 1q0-1 1-1h28q1 0 1 1v20q0 1-1 1H1q-1 0-1-1z" fill="#3a3a3a"/><path d="M0 1q0-1 1-1h10v4H0z" fill="#c6c6c6"/><path d="M11 0h9v4h-9z" fill="#999"/><path d="M20 0h9q1 0 1 1v3H20z" fill="#707070"/><path d="M4.500 8l5 5-5 5" fill="none" stroke="#ccc" stroke-width="3"/><path d="M13 17.500h10" stroke="#fff" stroke-width="2.800"/></svg></div>
    <div class="tb-app run d-flex align-items-center justify-content-center"><svg width="30" height="28" viewBox="0 0 30 28"><circle cx="14" cy="14" r="14" fill="#f7941e"/><circle cx="17.500" cy="14" r="14.300" fill="#ece3cf"/><circle cx="16.500" cy="14" r="13.400" fill="#2c2255"/><path d="M3 10.800h27.500M3 14h27.500M3 17.200h27.500" stroke="#fff" stroke-width="1.600"/></svg></div>
    <div class="tb-app run d-flex align-items-center justify-content-center"><svg width="30" height="27" viewBox="0 0 30 27" fill="none" stroke="#007a8c" stroke-width="2.800" stroke-linejoin="round"><path d="M1.800 1.500h7.400l2.300 10.500v4.500M11.500 11.500h4V25H8.300z"/><path d="M19.500 25h6.500q2.600 0 2.600-2.600V16h-8v3.500"/><path d="M18.500 10h10V4q0-2.300-2.500-2.300h-4.500q-3 0-3 2.800z" stroke="#f7941e" stroke-width="3.800" stroke-linejoin="miter"/></svg></div>
  </div>
  <div class="tray d-flex align-items-center ms-auto" style="margin-right:22px">
    <svg width="14" height="8" viewBox="0 0 14 8" fill="none" stroke="#111" stroke-width="1.500"><path d="M.7 7.300L7 1l6.300 6.300"/></svg>
    <svg style="margin-left:24px" width="21" height="21" viewBox="0 0 21 21"><path d="M4 15a4.200 4.200 0 0 1 .2-8.400A6 6 0 0 1 15.500 5.500c2.500.5 3.500 3 2.500 5.500l-6 4z" fill="#8d8d8d" stroke="#333" stroke-width="1.300"/><circle cx="14.500" cy="14.500" r="5.800" fill="#d8202a"/><path d="M12.300 12.300l4.400 4.400M16.700 12.300l-4.400 4.400" stroke="#fff" stroke-width="1.400"/></svg>
    <div class="text-center" style="margin-left:17px;width:40px">ENG<br>CMS</div>
    <svg style="margin-left:18px" width="20" height="17" viewBox="0 0 20 17" fill="none" stroke-width="1.400"><path d="M.7 7a13 13 0 0 1 18.600 0M3.500 9.500a9.300 9.300 0 0 1 13 0" stroke="#c0b9a5"/><path d="M6.500 12a5 5 0 0 1 7 0" stroke="#111"/><circle cx="10" cy="14.700" r="1.500" fill="#111"/></svg>
    <svg style="margin-left:10px" width="20" height="18" viewBox="0 0 20 18" fill="none" stroke="#111" stroke-width="1.300" stroke-linejoin="round"><path d="M.8 6.500v5h3L8 15.500v-13L3.800 6.500zM10.500 6.500q1.500 2.500 0 5M13 4q3.500 5 0 10"/><path d="M15.800 2q5 7 0 14" stroke="#c0b9a5"/></svg>
    <svg style="margin-left:10px" width="21" height="12" viewBox="0 0 21 12"><rect x=".7" y=".7" width="16.600" height="10.600" rx="2.500" fill="none" stroke="#111" stroke-width="1.400"/><rect x="3" y="3" width="4" height="6" rx=".8" fill="#111"/><path d="M18.500 3.500q2 .5 2 2.500t-2 2.500z" fill="#111"/></svg>
    <div class="text-end" style="margin:-1px 0 0 19px;width:80px;white-space:nowrap">3:19 PM<br>12/27/2024</div>
  </div>
</footer>

<script src="https://cdn.jsdelivr.net/npm/bootstrap@5.3.0/dist/js/bootstrap.bundle.min.js"></script>
<script>
const wpm=[36,18,36,39,34,36,33,36,36,38,36,38,39,37,39];
const raw=[30,36,40,40,36,32,36,36,44,44,44,40,36,48,48];
const X0=429.5,STEP=90.7,Y0=502.3,UNIT=4.2,TOP=300.7;
const px=i=>X0+i*STEP, py=v=>Y0-v*UNIT, clamp=y=>Math.max(TOP,Math.min(Y0,y));
// cardinal spline with control points capped to the chart area
function curve(values){
  const p=values.map((v,i)=>[px(i),py(v)]),t=.4;
  const cp=p.map((c,i)=>{
    const a=p[Math.max(i-1,0)],b=p[Math.min(i+1,p.length-1)];
    const d1=Math.hypot(c[0]-a[0],c[1]-a[1]),d2=Math.hypot(b[0]-c[0],b[1]-c[1]),s=d1+d2||1;
    const f1=t*d1/s,f2=t*d2/s;
    return{l:[c[0]-f1*(b[0]-a[0]),clamp(c[1]-f1*(b[1]-a[1]))],r:[c[0]+f2*(b[0]-a[0]),clamp(c[1]+f2*(b[1]-a[1]))]};
  });
  return 'M'+p[0]+p.slice(1).map((c,i)=>`C${cp[i].r} ${cp[i+1].l} ${c}`).join('');
}
const area=v=>curve(v)+`L${px(14)},${Y0}L${px(0)},${Y0}Z`;
const dots=(v,c)=>v.map((n,i)=>`<circle cx="${px(i)}" cy="${py(n)}" r="3.200" fill="${c}"/>`).join('');
let s='';
for(let i=0;i<15;i++){s+=`<path d="M${px(i)} ${TOP}V512" stroke="#2e3033" stroke-width="1"/><text x="${px(i)}" y="530" text-anchor="middle">${i==14?'14.68':i+1}</text>`}
for(let v=0;v<=40;v+=10){s+=`<path d="M420 ${py(v)}H${px(14)}" stroke="#2e3033" stroke-width="1"/><text x="416" y="${py(v)+5}" text-anchor="end">${v}</text>`}
s+=`<path d="${area(raw)}" fill="#040300" opacity=".1"/><path d="${curve(raw)}" fill="none" stroke="#646669" stroke-width="3.800"/>${dots(raw,'#646669')}`;
s+=`<path d="${area(wpm)}" fill="#040300" opacity=".1"/><path d="${curve(wpm)}" fill="none" stroke="#e2b714" stroke-width="3.800"/>${dots(wpm,'#e2b714')}`;
s+='<text transform="translate(384 401.500) rotate(-90)" text-anchor="middle" textLength="144">Words per Minute</text>';
s+='<text transform="translate(1735.500 402) rotate(90)" text-anchor="middle" textLength="54">Errors</text>';
document.getElementById('wpmChart').innerHTML=s;
</script>
</body>
</html>
